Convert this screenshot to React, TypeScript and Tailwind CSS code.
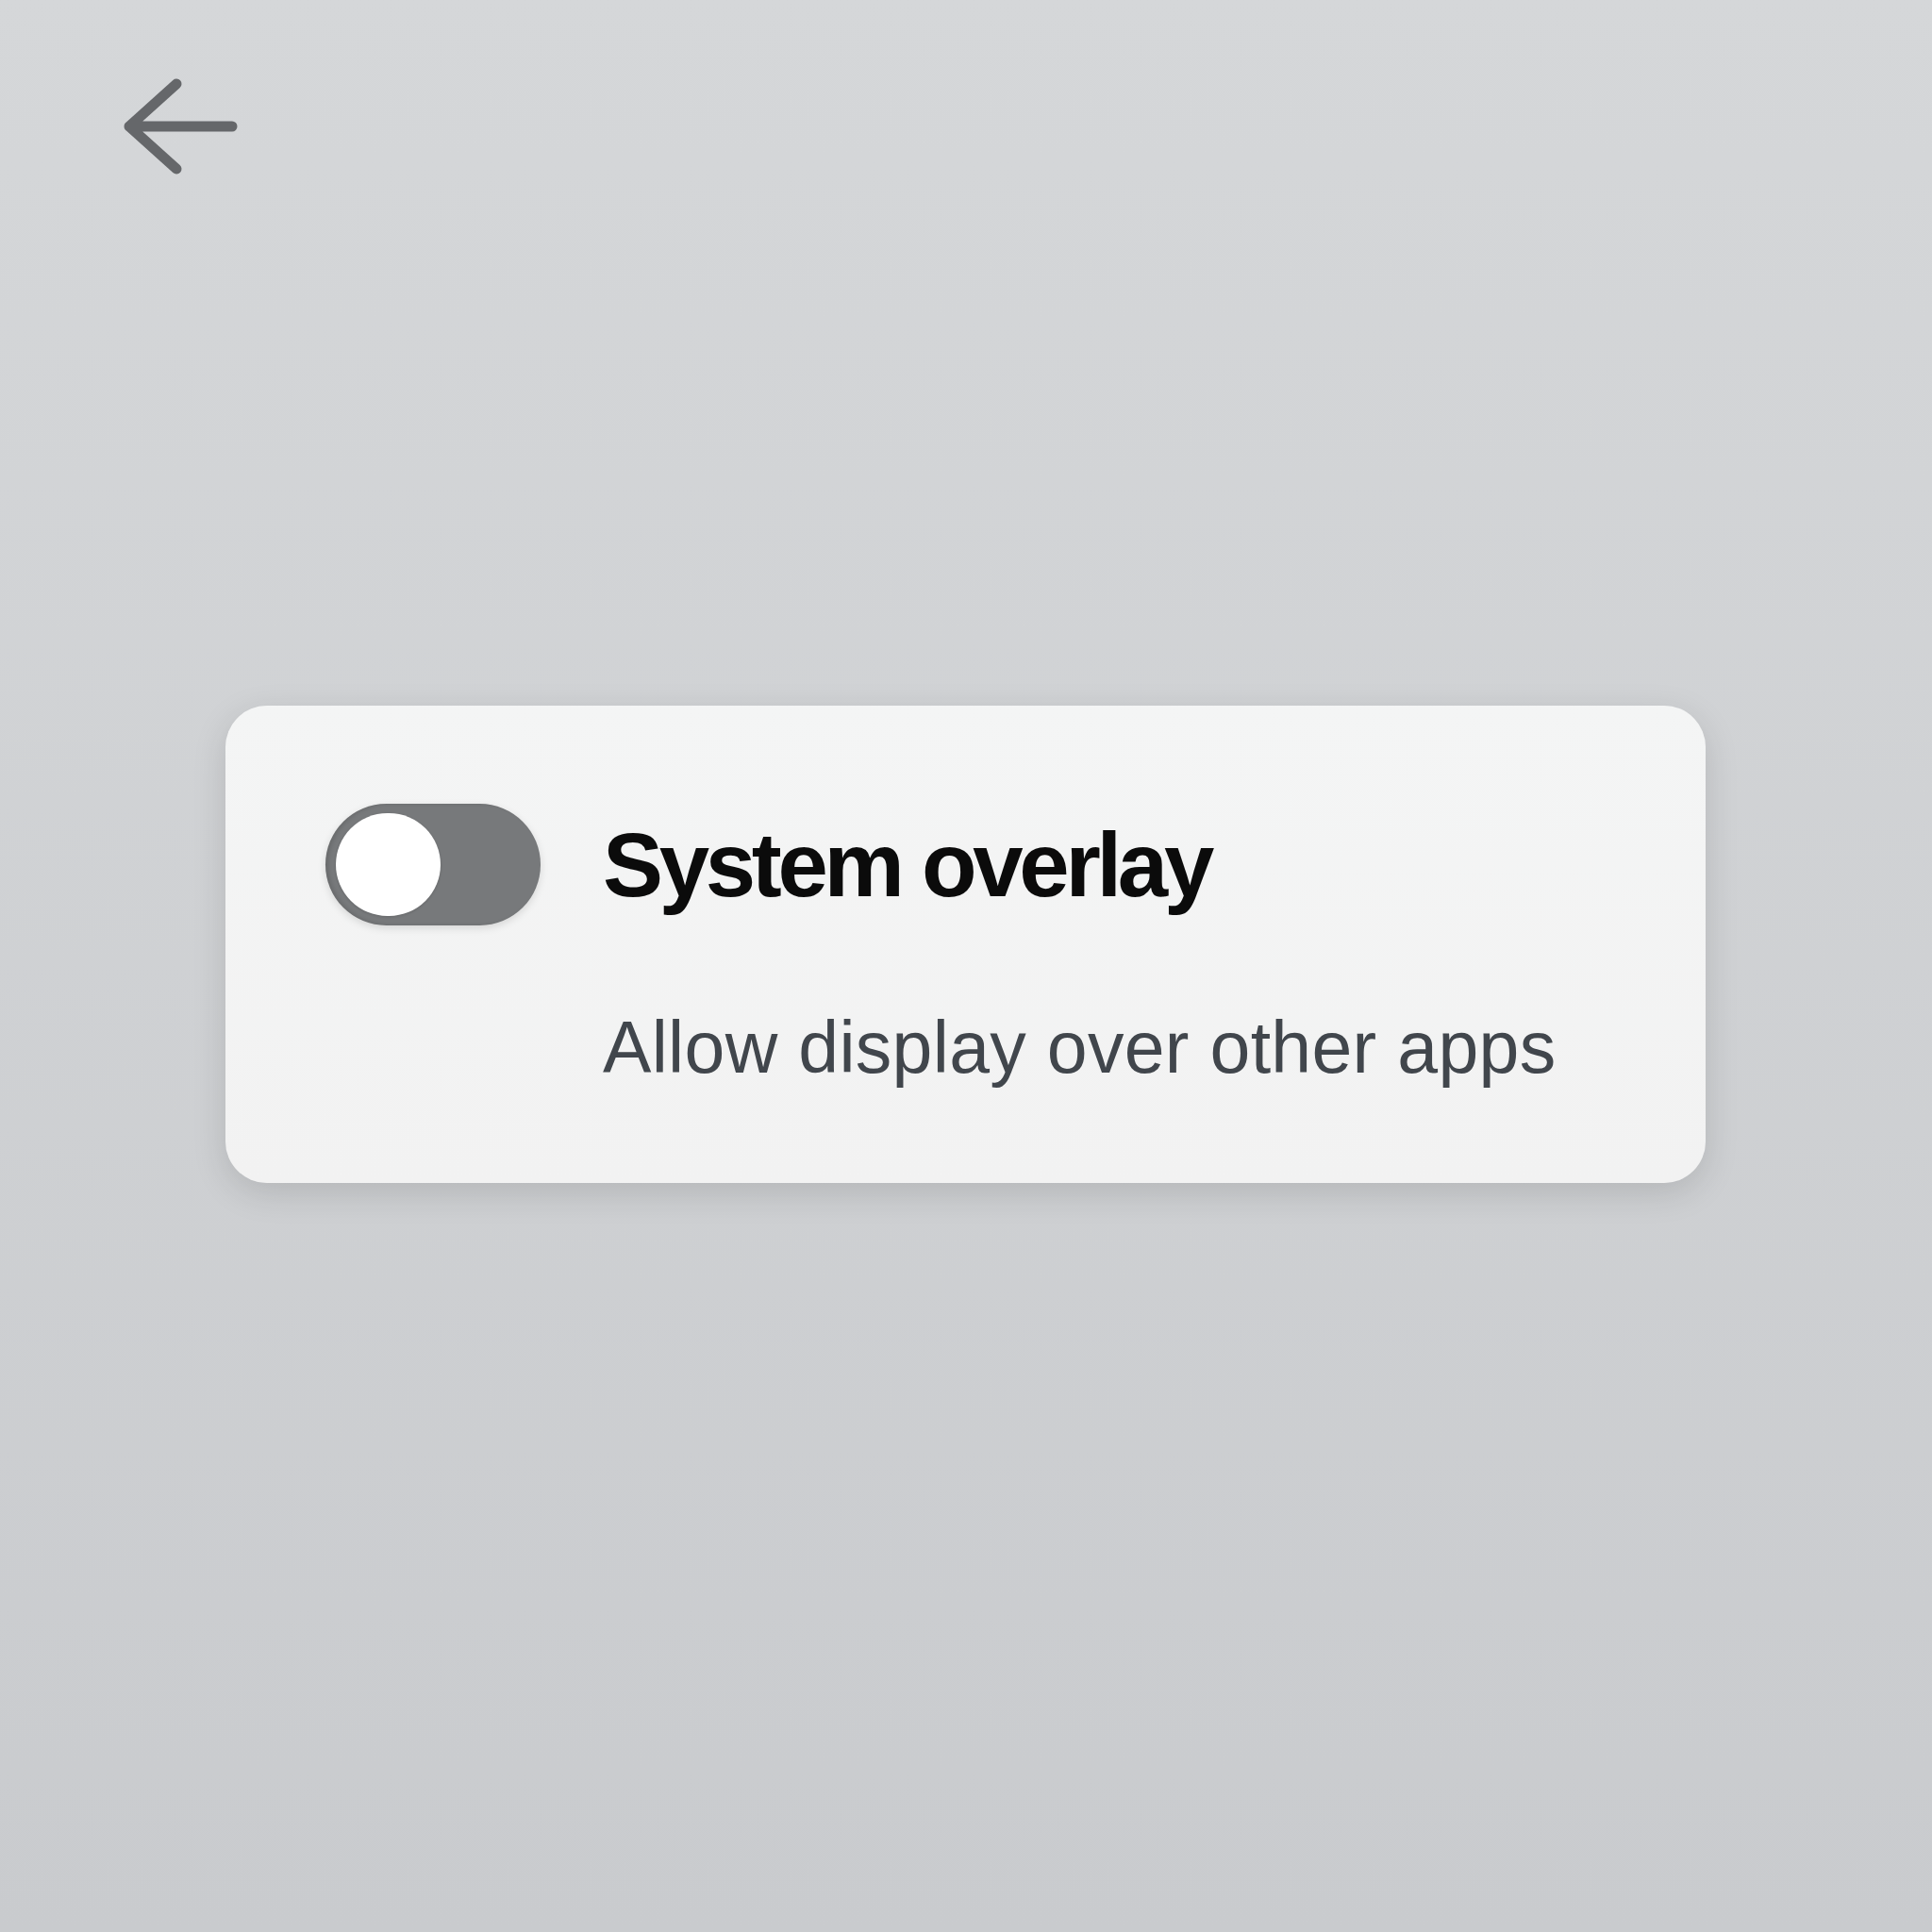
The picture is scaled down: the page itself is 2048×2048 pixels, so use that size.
import React from "react";

function BackArrow() {
  return (
    <svg width="140" height="110" viewBox="0 0 140 110" fill="none" aria-hidden="true">
      <path
        d="M67 9 L17 54 L67 99 M17 54 H126"
        stroke="#65676a"
        strokeWidth="11"
        strokeLinecap="round"
        strokeLinejoin="round"
      />
    </svg>
  );
}

function Toggle() {
  return (
    <div className="w-[228px] h-[129px] rounded-full bg-[#77797b] flex items-center pl-[11px] shadow-[inset_3px_0_4px_rgba(0,0,0,0.12),0_3px_8px_rgba(0,0,0,0.12)]">
      <div className="w-[111px] h-[109px] rounded-full bg-white shadow-[0_1px_3px_rgba(0,0,0,0.15)]" />
    </div>
  );
}

export default function App() {
  return (
    <div className="w-[2048px] h-[2048px] bg-gradient-to-b from-[#d5d7d9] to-[#c9cbce] flex flex-col font-['Liberation_Sans',Arial,sans-serif]">
      {/* Header */}
      <div className="pt-[80px] pl-[120px]">
        <BackArrow />
      </div>

      {/* Setting card */}
      <div className="mt-[558px] ml-[239px] w-[1569px] h-[506px] rounded-[44px] bg-gradient-to-b from-[#f4f5f5] to-[#f2f2f2] shadow-[0_10px_36px_rgba(0,0,0,0.13)] pl-[106px] pt-[104px]">
        <div className="grid grid-cols-[228px_1fr] gap-x-[66px]">
          <Toggle />
          <div className="flex items-center text-[96px] font-bold tracking-[-0.045em] text-[#0b0b0b] leading-none">
            System overlay
          </div>
          <div />
          <p className="mt-[91px] text-[77px] tracking-[0.004em] leading-none text-[#41464c]">
            Allow display over other apps
          </p>
        </div>
      </div>
    </div>
  );
}
